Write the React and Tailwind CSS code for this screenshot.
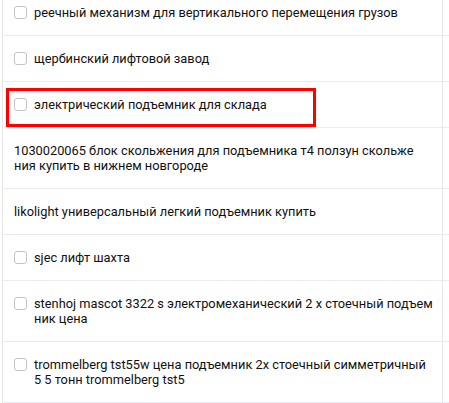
const rows = [
  { check: true, lines: ['реечный механизм для вертикального перемещения грузов'] },
  { check: true, lines: ['щербинский лифтовой завод'] },
  { check: true, lines: ['электрический подъемник для склада'], marked: true },
  { check: false, lines: ['1030020065 блок скольжения для подъемника т4 ползун скольже', 'ния купить в нижнем новгороде'] },
  { check: false, lines: ['likolight универсальный легкий подъемник купить'] },
  { check: true, lines: ['sjec лифт шахта'] },
  { check: true, lines: ['stenhoj mascot 3322 s электромеханический 2 х стоечный подъем', 'ник цена'] },
  { check: true, lines: ['trommelberg tst55w цена подъемник 2х стоечный симметричный', '5 5 тонн trommelberg tst5'] },
];

const App = () => {
  return (
    <div className="w-[449px] h-[403px] overflow-hidden bg-white font-['Roboto',sans-serif] text-[12.8px] leading-[15px] text-[#111]">
      <div className="-mt-[10px] ml-[2px]">
        {rows.map((row, i) => (
          <div key={i} className="flex">
            <div className="relative w-[441px] border-l border-r border-b border-l-[#e6e6e6] border-r-[#e6e6e6] border-b-[#ebebf2] py-[15px] pl-[11px] flex items-start">
              {row.check && (
                <span className="shrink-0 w-[13px] h-[13px] mt-[1px] mr-[7px] rounded-[3px] border border-[#c4c4c4] bg-white" />
              )}
              <div>
                {row.lines.map((l, j) => (
                  <div key={j} className="whitespace-nowrap">{l}</div>
                ))}
              </div>
              {row.marked && (
                <div className="absolute left-[3px] top-[6px] w-[310px] h-[39px] border-[3px] border-[#ff0000]" />
              )}
            </div>
            <div className="flex-1 border-b border-[#ebebf2]" />
          </div>
        ))}
      </div>
    </div>
  );
};

export default App;
